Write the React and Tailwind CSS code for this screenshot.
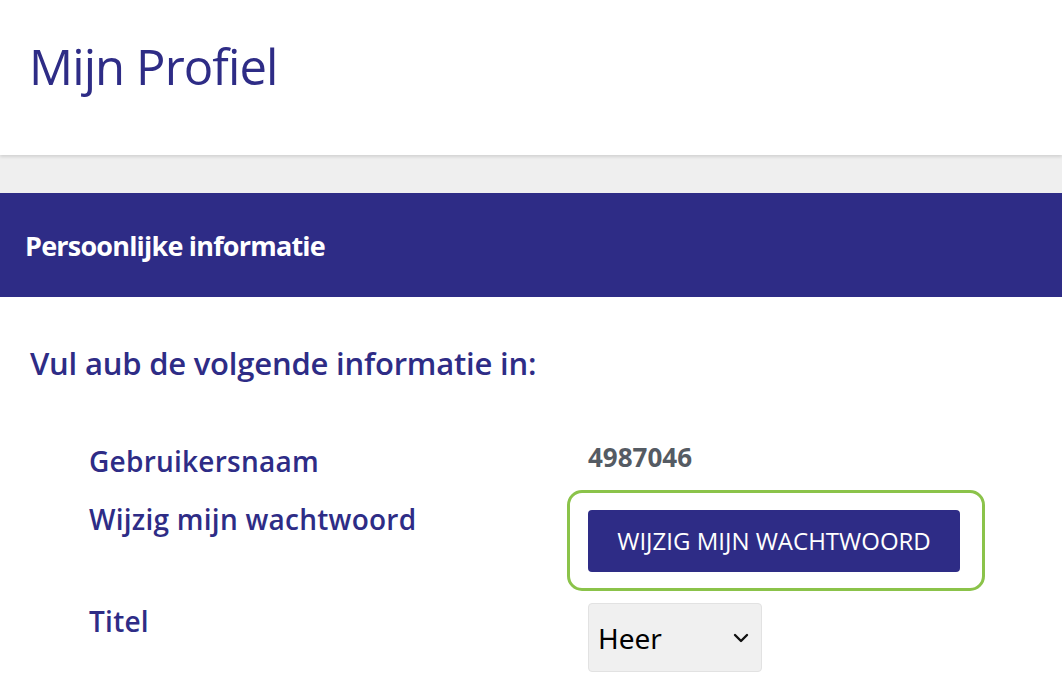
import React from "react";

export default function App() {
  return (
    <div className="min-h-screen bg-white" style={{ fontFamily: '"Open Sans", "Noto Sans", sans-serif' }}>
      {/* Page header */}
      <div className="h-[155px] bg-white flex items-center px-[29px] shadow-[0_2px_3px_rgba(0,0,0,0.12)] relative z-10">
        <h1 className="text-[49px] font-medium tracking-[-0.9px] text-[#2e2c86] leading-none -mt-[22px]">Mijn Profiel</h1>
      </div>
      <div className="h-[38px] bg-[#efefef]" />

      {/* Section bar */}
      <div className="h-[104px] bg-[#2e2c86] flex items-center px-[25px]">
        <h2 className="text-[27px] font-bold text-white tracking-[-0.8px] leading-none">Persoonlijke informatie</h2>
      </div>

      <div className="px-[30px] pt-[51px]">
        <p className="text-[31px] font-semibold tracking-[-0.2px] text-[#2e2c86] leading-none">Vul aub de volgende informatie in:</p>

        <div className="mt-[62px] pl-[59px] flex flex-col">
          {/* Gebruikersnaam */}
          <div className="flex h-[40px] items-center">
            <div className="w-[499px] text-[28px] font-semibold tracking-[0.25px] text-[#2e2c86] leading-none">Gebruikersnaam</div>
            <div className="text-[26px] font-bold text-[#555b63] leading-none -mt-[8px]">4987046</div>
          </div>

          {/* Wachtwoord */}
          <div className="flex h-[110px]">
            <div className="w-[499px] pt-[24px] text-[28px] font-semibold tracking-[0.25px] text-[#2e2c86] leading-none">Wijzig mijn wachtwoord</div>
            <div className="-ml-[21px] pt-[9px]">
              <div className="w-[418px] h-[101px] rounded-[15px] border-[3px] border-[#8bc34a] flex items-center pl-[18px]">
                <button className="w-[372px] h-[62px] rounded-[4px] bg-[#2e2c86] text-white text-[24px] leading-none">
                  WIJZIG MIJN WACHTWOORD
                </button>
              </div>
            </div>
          </div>

          {/* Titel */}
          <div className="flex">
            <div className="w-[499px] pt-[16px] text-[28px] font-semibold tracking-[0.25px] text-[#2e2c86] leading-none">Titel</div>
            <div className="pt-[12px]">
              <div className="w-[174px] h-[69px] rounded-[4px] border border-[#e2e2e2] bg-[#f0f0f0] flex items-center justify-between pl-[9px] pr-[12px]">
                <span className="text-[28px] text-black" style={{ fontFamily: '"Noto Sans", sans-serif' }}>Heer</span>
                <svg width="16" height="10" viewBox="0 0 16 10" fill="none">
                  <path d="M2 2 L8 8 L14 2" stroke="#111" strokeWidth="2.4" strokeLinecap="round" strokeLinejoin="round" />
                </svg>
              </div>
            </div>
          </div>
        </div>
      </div>
    </div>
  );
}
